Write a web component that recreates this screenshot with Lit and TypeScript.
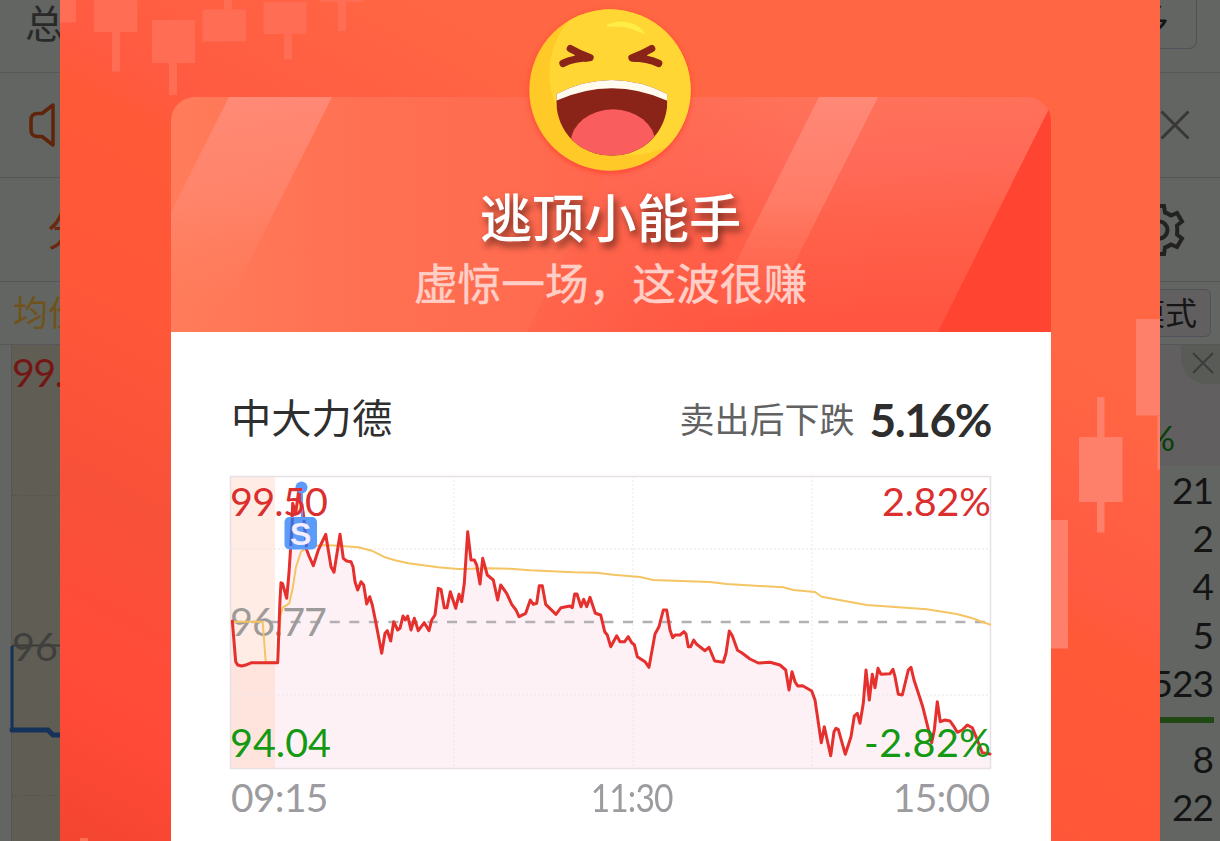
import { LitElement, css, html, svg } from "lit";
import { customElement } from "lit/decorators.js";

type Point = [number, number];

const toPoints = (points: Point[]) => points.map((p) => p.join(",")).join(" ");

// Chart data, in chart pixels (760 x 292)
const PRICE: Point[] = [
  [2.3, 145], [5.7, 185.7], [7.7, 189], [11.7, 190], [16.7, 188.7], [21.7, 186.7],
  [47.7, 186.7], [50, 124], [51, 106.7], [52.5, 107.5], [56.7, 122.3], [59, 97],
  [60.7, 70.7], [62.7, 27.3], [65.7, 37.3], [69, 12.3], [73.3, 37.3], [76.7, 74],
  [79, 80], [83.3, 89.7], [88.3, 74], [95.7, 58.3], [101, 90.7], [104, 96.3],
  [110, 58.3], [113.3, 82.3], [116.7, 85], [121, 85.7], [123, 90.7], [125, 105.7],
  [127.7, 114], [131, 105.7], [133.7, 109], [136.7, 128], [139.7, 120.7],
  [142.3, 129], [145, 142.3], [151.7, 177.3], [155, 157.3], [157.3, 154.7],
  [160.7, 165], [163.7, 145.7], [167.7, 154], [170, 152.3], [173, 140],
  [175.3, 144], [177.7, 140], [181, 154], [184.3, 142.3], [188.3, 154.7],
  [194.3, 146.7], [199, 154.7], [201.7, 144], [205, 139], [208.3, 112.3],
  [211, 113.3], [214.3, 131.7], [217, 131.7], [220.3, 115.7], [225.7, 132.3],
  [229, 118.3], [231.7, 125.7], [234.3, 107.3], [237.7, 55.7], [241, 84],
  [244.3, 84], [246.7, 89], [250, 108], [252.7, 82.3], [257.3, 99], [263.3, 104],
  [267.7, 124], [270.7, 109], [276.7, 117.3], [281.7, 128.3], [286, 134],
  [289, 140.7], [295.7, 137.3], [300.3, 124], [303.3, 128.3], [306.7, 127.3],
  [309.3, 109.7], [312.3, 109.7], [315.7, 128.3], [326, 138.3], [331, 131.7],
  [340, 130], [342.3, 131.7], [344.7, 118], [347, 118], [351, 130.7],
  [353.7, 123.3], [356.7, 130.7], [360, 121.3], [365.3, 137.3], [370.7, 139],
  [374.7, 155.7], [377.3, 159], [380.7, 170.7], [386.7, 159.7], [390, 165.7],
  [394.7, 165.7], [398.3, 160.7], [401.7, 166.7], [404.3, 168.7], [407.3, 180.7],
  [415, 185.7], [419, 191.3], [425, 158], [429, 150.7], [433.3, 134],
  [436.7, 134], [440, 154], [442.7, 161.7], [445, 159], [450, 159], [454, 155.7],
  [456, 158], [458.3, 170.7], [460.7, 170.7], [463.7, 164], [466.7, 168.3],
  [475, 174.7], [479, 171.3], [484.7, 185], [493.3, 186.3], [496, 177.3],
  [499.3, 155], [502.3, 159.7], [507.5, 174.3], [511.7, 176.7], [520, 183],
  [528.3, 187], [540, 186.3], [550, 189], [555.7, 194], [559, 214],
  [562, 195.7], [565, 205.7], [567.7, 210], [572.7, 209.7], [581.7, 215],
  [585, 224], [591.3, 266.7], [594.3, 250.7], [600.7, 279.7], [604, 255.7],
  [606, 252.3], [608.3, 253.3], [615.3, 278.3], [621, 260.7], [624.3, 240],
  [627.3, 237.3], [630, 247.3], [633.3, 227.3], [636, 194], [639.3, 224],
  [642.3, 198.3], [645, 211.7], [648, 192.3], [651, 198.3], [660, 197.7],
  [663, 193.3], [665, 200.7], [668.3, 218.3], [672.3, 219], [678.3, 194],
  [681, 191.3], [684, 204], [690, 222.3], [692.7, 230.7], [701.7, 266.7],
  [704.3, 254], [707.3, 225.7], [710.3, 245.7], [715, 244], [720, 245],
  [724, 250.7], [727.3, 256.3], [732.3, 254], [737.3, 249], [742.3, 251.7],
  [746.7, 262.3], [752.3, 276.7], [760, 278],
];

const AVERAGE: Point[] = [
  [2.3, 145.7], [32.7, 145.7], [35.7, 185.7], [47.7, 186.7], [50.5, 140],
  [52.7, 131.7], [59.3, 127.3], [62.7, 112.3], [66, 90.7], [71, 75.7], [78, 71],
  [91.7, 69], [108.3, 69.7], [128.3, 71.3], [141.7, 74.7], [155, 81.3],
  [165, 84.3], [178.3, 87.3], [208.3, 91.3], [228.3, 93], [243, 92.7],
  [258.3, 92.3], [280, 92.7], [300, 94.3], [343.3, 96.3], [366.7, 96.7],
  [383.3, 98.7], [410, 101], [423.3, 104], [480, 106], [496.7, 108],
  [553.3, 111.3], [563.3, 114], [585, 116], [591.7, 120.7], [636.7, 129],
  [696.7, 133.3], [726.7, 138], [741.7, 142], [753.3, 146.3], [760, 148.5],
];

// Decorative candles on the poster: x, y, width, height
const CANDLES = [
  [0, 0, 16, 22.5],
  [34, 0, 43.5, 32], [52, 32, 8, 39.5],
  [92, 20, 43, 43], [109, 63, 8, 32],
  [142.5, 9.5, 43.5, 32], [164, 0, 8, 9.5],
  [203.5, 2, 43, 32], [224, 34, 8, 25.5],
  [260, 0, 43, 2], [278, 2, 8, 29],
];
const CANDLES_BRIGHT = [
  [1019, 437, 43.5, 65], [1037, 397, 7.5, 40], [1037, 502, 7.5, 30.5],
  [1076, 319, 24, 96.5], [1097.5, 415.5, 3, 54],
  [980, 520, 28, 128.5],
];

@customElement("laugh-emoji")
export class LaughEmoji extends LitElement {
  render() {
    return html`<svg viewBox="0 0 486 486">
      <defs>
        <clipPath id="face"><circle cx="243" cy="243" r="242" /></clipPath>
        <clipPath id="mouth">
          <path d="M82 255 Q248 171 415 255 V280 C413 368 345 440 249 440 C150 440 84 368 82 280 Z" />
        </clipPath>
      </defs>
      <circle cx="243" cy="243" r="242" fill="#ffc928" />
      <circle cx="306" cy="193" r="245" fill="#ffd633" clip-path="url(#face)" />
      <path d="M233 48 C266 30 324 33 350 77 C316 60 276 48 233 54 Z" fill="#ffed47" />
      <g fill="none" stroke="#8a2418" stroke-width="22" stroke-linecap="round" stroke-linejoin="round">
        <path d="M124 119 Q150 134 183 146 Q135 147 102 163" />
        <path d="M368 119 Q342 134 309 147 Q356 147 389 163" />
        <path d="M150 138 L172 146 M342 139 L320 147" stroke-width="24" />
      </g>
      <g clip-path="url(#mouth)">
        <rect x="80" y="200" width="340" height="245" fill="#8a2418" />
        <ellipse cx="252" cy="402" rx="127" ry="101" fill="#f95d5d" />
        <path d="M80 200 H417 V276 Q248 200 80 276 Z" fill="#fffbee" />
      </g>
    </svg>`;
  }

  static styles = css`
    :host {
      display: block;
      width: 162px;
      height: 162px;
      border-radius: 50%;
      box-shadow: 0 2px 5px rgba(255, 50, 30, 0.6);
    }

    svg {
      display: block;
      width: 100%;
      height: 100%;
    }
  `;
}

@customElement("price-chart")
export class PriceChart extends LitElement {
  render() {
    const price = toPoints(PRICE);
    return html`<svg viewBox="0 0 761 293">
      <rect x="0" y="0" width="761" height="293" fill="#fff" />
      <rect x="0" y="0" width="45" height="293" fill="#ffece5" />
      <polygon points="2.3,292 ${price} 760,292" fill="#fee6ef" fill-opacity="0.55" />
      <rect x="0" y="187" width="45" height="105" fill="#ffe3d8" fill-opacity="0.7" />
      <path d="M0 73H760M0 219H760M224 0V292M403 0V292M582 0V292" class="grid" />
      <rect x="0.5" y="0.5" width="760" height="292" class="frame" />
      <path d="M2 146H760" class="base" />
      <text x="0" y="160" textLength="97" class="muted">96.77</text>
      <polyline points=${toPoints(AVERAGE)} class="average" />
      <polyline points=${price} class="price" />
      <path d="M72 16V42" stroke="#5b9bfa" stroke-width="2" />
      <circle cx="71.5" cy="11.5" r="6" fill="#5b9bfa" />
      <rect x="54.5" y="41" width="32.5" height="32.5" rx="5" fill="#5b9bfa" />
      <path d="M60.7 70L62.5 42M74 44L76.5 71" stroke="#4756bd" stroke-width="3" opacity="0.75" />
      <text x="70.7" y="69" text-anchor="middle" class="mark">S</text>
      <text x="0" y="39.5" textLength="98" class="up">99.50</text>
      <text x="761" y="39.5" textLength="109" text-anchor="end" class="up">2.82%</text>
      <text x="0" y="281" textLength="101" class="down">94.04</text>
      <text x="761" y="281" textLength="127" text-anchor="end" class="down">-2.82%</text>
    </svg>`;
  }

  static styles = css`
    :host {
      display: block;
      width: 761px;
      height: 293px;
    }

    svg {
      display: block;
      width: 100%;
      height: 100%;
      overflow: visible;
      font: 39.5px Lato, "Noto Sans", sans-serif;
    }

    .frame {
      fill: none;
      stroke: #e6e0e4;
      stroke-width: 1.5;
    }

    .grid {
      fill: none;
      stroke: #ebe5e9;
      stroke-width: 1;
      stroke-dasharray: 2 2;
    }

    .base {
      stroke: #b3afb3;
      stroke-width: 2.6;
      stroke-dasharray: 10 9.55;
    }

    .average,
    .price {
      fill: none;
      stroke-linejoin: round;
      stroke-linecap: round;
    }

    .average {
      stroke: #f5c463;
      stroke-width: 2;
    }

    .price {
      stroke: #e5302d;
      stroke-width: 3;
    }

    .muted {
      fill: #9d9a9a;
    }

    .mark {
      fill: #f3edff;
      font: bold 32px "Liberation Sans", sans-serif;
    }

    .up {
      fill: #da2f2e;
    }

    .down {
      fill: #139913;
    }
  `;
}

@customElement("app-root")
export class AppRoot extends LitElement {
  render() {
    return html`
      <aside class="left">
        <div class="row r1"><span class="total">总</span></div>
        <div class="row r2">
          <svg class="speaker" viewBox="0 0 26 44">
            <path d="M24 2V42L13 33.5H8Q2 33 2 27V17Q2 11 8 10.5H13Z" />
          </svg>
        </div>
        <div class="row r3"><span class="minute">分</span></div>
        <div class="row r4"><span class="avg">均价</span></div>
        <div class="back-chart">
          <svg viewBox="0 0 60 497">
            <rect x="11.5" y="0" width="49" height="497" fill="#5f5d54" />
            <path d="M11.5 0V497" stroke="#555651" />
            <path d="M12 150.5H60M12 450.5H60" stroke="#504f49" stroke-dasharray="1 2" />
            <text x="12" y="42" textLength="52" fill="#741714">99.</text>
            <path d="M12 300.5H60" stroke="#3b3a36" stroke-width="2" />
            <text x="12" y="316" fill="#3f403d">96</text>
            <path d="M12 301V385" stroke="#15325a" stroke-width="3" />
            <path d="M12 385H48L53 390H60" stroke="#15325a" stroke-width="5" fill="none" stroke-linecap="round" />
          </svg>
        </div>
      </aside>

      <main class="poster">
        <svg class="decor" viewBox="0 0 1100 841">
          ${CANDLES.map(([x, y, w, h]) => svg`<rect class="dim" x=${x} y=${y} width=${w} height=${h} />`)}
          ${CANDLES_BRIGHT.map(([x, y, w, h]) => svg`<rect class="bright" x=${x} y=${y} width=${w} height=${h} />`)}
          <rect class="dim" x="20" y="838" width="8" height="3" />
        </svg>
        <section class="card">
          <header>
            <svg class="facets" viewBox="0 0 880 235">
              <defs>
                <linearGradient id="streak" x1="0" y1="0" x2="0" y2="1">
                  <stop offset="0" stop-color="#ff9080" stop-opacity="0.75" />
                  <stop offset="0.45" stop-color="#ff8a74" stop-opacity="0.6" />
                  <stop offset="0.95" stop-color="#ff7d5e" stop-opacity="0" />
                </linearGradient>
                <linearGradient id="facet" x1="0" y1="0" x2="0.1" y2="1">
                  <stop offset="0" stop-color="#ff735a" />
                  <stop offset="0.35" stop-color="#ff6a58" />
                  <stop offset="0.6" stop-color="#ff614a" />
                  <stop offset="1" stop-color="#ff5541" />
                </linearGradient>
                <linearGradient id="fade" x1="0" y1="0" x2="1" y2="0">
                  <stop offset="0" stop-color="#fff" stop-opacity="0.25" />
                  <stop offset="0.5" stop-color="#fff" />
                </linearGradient>
                <mask id="soft"><rect x="350" y="0" width="530" height="235" fill="url(#fade)" /></mask>
              </defs>
              <polygon points="474,0 884,0 767,235 356,235" fill="url(#facet)" mask="url(#soft)" />
              <polygon points="58,0 161,0 43,235 -60,235" fill="url(#streak)" />
              <polygon points="648,0 707,0 589,235 530,235" fill="url(#streak)" />
              <polygon points="884,0 767,235 880,235" fill="#ff4432" />
            </svg>
            <laugh-emoji></laugh-emoji>
            <h1>逃顶小能手</h1>
            <p class="sub">虚惊一场，这波很赚</p>
          </header>
          <div class="body">
            <div class="summary">
              <span class="stock">中大力德</span>
              <span class="label">卖出后下跌</span>
              <span class="drop">5.16%</span>
            </div>
            <price-chart></price-chart>
            <div class="times">
              <span>09:15</span>
              <span class="noon">11:30</span>
              <span>15:00</span>
            </div>
          </div>
        </section>
      </main>

      <aside class="right">
        <div class="row r1"><div class="more"><span>多</span></div></div>
        <div class="row r2">
          <svg class="cross" viewBox="0 0 30 30"><path d="M1.5 1.5L28.5 28.5M28.5 1.5L1.5 28.5" /></svg>
        </div>
        <div class="row r3">
          <svg class="gear" viewBox="-26 -26 52 52">
            <path
              d="M-5 -24H5L6 -17.500Q9 -16.500 12 -14.500L18 -17L23 -8.500L18 -4.500Q18.500 0 18 4.500L23 8.500L18 17L12 14.500Q9 16.500 6 17.500L5 24H-5L-6 17.500L-12 14.500L-18 17L-23 8.500L-18 4.500V-4.500L-23 -8.500L-18 -17L-12 -14.500L-6 -17.500Z"
            />
            <circle r="8.5" />
          </svg>
        </div>
        <div class="row r4"><div class="mode"><span>模式</span></div></div>
        <div class="quote">
          <div class="corner">
            <svg viewBox="0 0 22 22"><path d="M1 1L21 21M21 1L1 21" /></svg>
          </div>
          <span class="percent">%</span>
        </div>
        <div class="volumes">
          <span>21</span><span>2</span><span>4</span><span>5</span><span>523</span>
        </div>
        <div class="divider"></div>
        <div class="volumes"><span>8</span><span>22</span></div>
      </aside>
    `;
  }

  static styles = css`
    :host {
      display: grid;
      grid-template-columns: 60px 1100px 60px;
      width: 1220px;
      height: 841px;
      overflow: hidden;
      background: #626561;
      font-family: Lato, "Noto Sans CJK SC", sans-serif;
    }

    * {
      box-sizing: border-box;
    }

    svg {
      display: block;
      flex: none;
    }

    aside {
      display: flex;
      flex-direction: column;
      overflow: hidden;
      height: 841px;
    }

    .row {
      display: flex;
      align-items: center;
      flex: none;
      overflow: hidden;
      white-space: nowrap;
      border-bottom: 1.5px solid #555759;
    }

    .r1 {
      height: 73px;
    }

    .r2 {
      height: 105px;
    }

    .r3 {
      height: 104px;
    }

    .r4 {
      height: 63px;
    }

    .total {
      margin: -31px 0 0 25px;
      font-size: 39px;
      color: #292929;
    }

    .speaker {
      width: 26px;
      height: 44px;
      margin-left: 29px;
      fill: none;
      stroke: #5f2409;
      stroke-width: 3.5;
      stroke-linejoin: round;
    }

    .minute {
      margin: -4px 0 0 47px;
      font-size: 42px;
      color: #6b2710;
    }

    .avg {
      margin: -5px 0 0 13px;
      font-size: 35px;
      color: #70521b;
    }

    .back-chart svg {
      width: 60px;
      height: 497px;
      font-size: 39.5px;
    }

    .poster {
      position: relative;
      height: 841px;
      padding: 97px 109.5px 0 110.5px;
      overflow: hidden;
      background: linear-gradient(
        208.6deg,
        #ff6643 0%,
        #ff6643 28%,
        #ff5b42 43%,
        #ff5938 47%,
        #ff5738 60%,
        #f85139 74%,
        #ff4c39 85%,
        #ff4a38 90%,
        #f3452f 100%
      );
    }

    .decor {
      position: absolute;
      inset: 0;
      width: 1100px;
      height: 841px;
    }

    .dim {
      fill: #ff6d55;
    }

    .bright {
      fill: #ff806a;
    }

    .card {
      position: relative;
      height: 744px;
    }

    header {
      position: relative;
      display: flex;
      flex-direction: column;
      align-items: center;
      height: 235px;
      border-radius: 24px 24px 0 0;
      background: linear-gradient(90deg, #ff7c5a 0%, #ff7052 22%, #ff6a4f 45%, #ff6049 60%, #ff5844 100%);
    }

    .facets {
      position: absolute;
      inset: 0;
      width: 880px;
      height: 235px;
      border-radius: 24px 24px 0 0;
    }

    laugh-emoji {
      position: relative;
      flex: none;
      margin: -88px 1.5px 0 0;
    }

    h1 {
      position: relative;
      margin: 14px 0 0;
      font-size: 52.3px;
      font-weight: 500;
      line-height: 66px;
      color: #fff;
      text-shadow: 3px 5px 7px rgba(80, 30, 20, 0.8);
    }

    .sub {
      position: relative;
      margin: 0;
      font-size: 43.7px;
      line-height: 64px;
      color: #ffcfc7;
      -webkit-text-stroke: 0.5px #ffcfc7;
    }

    .body {
      height: 509px;
      padding: 0 60px 0 59.5px;
      background: #fff;
    }

    .summary {
      display: flex;
      align-items: center;
      height: 144px;
      padding-top: 30px;
      white-space: nowrap;
    }

    .stock {
      flex: 1;
      margin: -7px 0 0 1px;
      font-size: 40.3px;
      color: #2f2f2f;
    }

    .label {
      margin-top: -4px;
      font-size: 35px;
      color: #626262;
    }

    .drop {
      width: 121px;
      margin-left: 15px;
      font-size: 46px;
      font-weight: 700;
      letter-spacing: -1.4px;
      color: #2e2e2e;
    }

    .times {
      display: flex;
      justify-content: space-between;
      padding: 4px 1px 0 1px;
      font-size: 39px;
      line-height: 48px;
      letter-spacing: -0.7px;
      color: #9c9b9f;
    }

    .noon {
      margin-left: 43px;
      letter-spacing: -1px;
      transform: scaleX(0.86);
    }

    .more {
      width: 37px;
      height: 60px;
      margin-top: -34px;
      overflow: hidden;
      border: 1.5px solid #50525a;
      border-left: 0;
      border-radius: 0 8px 8px 0;
    }

    .more span {
      display: block;
      margin: 4px 0 0 -29px;
      font-size: 38px;
      line-height: 50px;
      color: #161616;
    }

    .cross {
      width: 30px;
      height: 30px;
      fill: none;
      stroke: #383838;
      stroke-width: 3;
    }

    .gear {
      width: 52px;
      height: 52px;
      margin-left: -27px;
      fill: none;
      stroke: #222;
      stroke-width: 4;
    }

    .mode {
      display: flex;
      align-items: center;
      justify-content: flex-end;
      width: 51px;
      height: 48px;
      padding: 0 13px 5px 0;
      overflow: hidden;
      background: #625f61;
      border: 1.5px solid #50525a;
      border-left: 0;
      border-radius: 0 6px 6px 0;
    }

    .mode span {
      font-size: 32px;
      color: #161616;
    }

    .quote {
      display: flex;
      flex: none;
      flex-direction: column;
      height: 121px;
      background: #625f61;
    }

    .corner {
      display: flex;
      align-items: center;
      align-self: flex-end;
      justify-content: center;
      width: 39px;
      height: 39px;
      padding: 0 0 4px 5px;
      background: #595b57;
      border-radius: 0 0 0 26px;
    }

    .corner svg {
      width: 22px;
      height: 22px;
      fill: none;
      stroke: #3c3c3c;
      stroke-width: 2;
    }

    .percent {
      margin: 34px 0 0 -13px;
      font-size: 35px;
      line-height: 38px;
      color: #073f08;
    }

    .volumes {
      display: flex;
      flex: none;
      flex-direction: column;
      align-items: flex-end;
      padding-right: 7px;
      font-size: 37px;
      line-height: 48.2px;
      letter-spacing: -1px;
      color: #141414;
    }

    .divider {
      flex: none;
      width: 54px;
      height: 6px;
      margin: 10px 0 12px;
      background: #204714;
    }
  `;
}

declare global {
  interface HTMLElementTagNameMap {
    "app-root": AppRoot;
    "laugh-emoji": LaughEmoji;
    "price-chart": PriceChart;
  }
}
